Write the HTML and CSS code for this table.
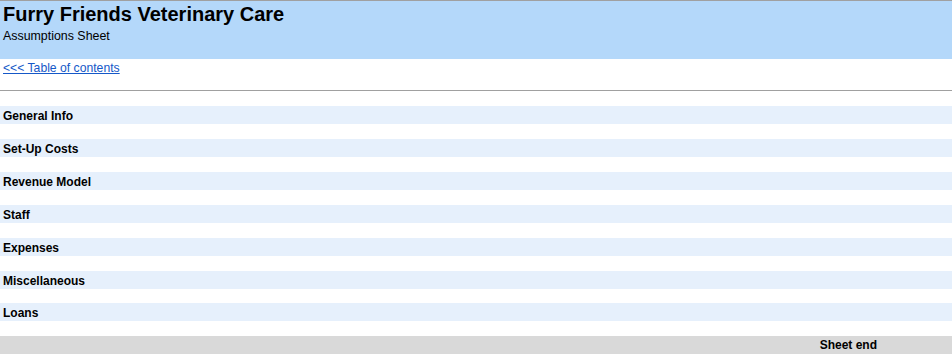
FILE: index.html
```html
<!DOCTYPE html>
<html>
<head>
<meta charset="utf-8">
<title>Furry Friends Veterinary Care - Assumptions</title>
<link rel="stylesheet" href="styles.css">
</head>
<body>
<div class="sheet">
  <header class="header">
    <h1 class="title">Furry Friends Veterinary Care</h1>
    <div class="subtitle">Assumptions Sheet</div>
  </header>
  <div class="link-row"><a class="toc-link" href="#">&lt;&lt;&lt; Table of contents</a></div>
  <div class="divider"></div>
  <div class="sections">
    <div class="spacer"></div>
    <div class="band">General Info</div>
    <div class="spacer"></div>
    <div class="band">Set-Up Costs</div>
    <div class="spacer"></div>
    <div class="band">Revenue Model</div>
    <div class="spacer"></div>
    <div class="band">Staff</div>
    <div class="spacer"></div>
    <div class="band">Expenses</div>
    <div class="spacer"></div>
    <div class="band">Miscellaneous</div>
    <div class="spacer spacer-short"></div>
    <div class="band">Loans</div>
    <div class="spacer"></div>
    <div class="sheet-end"><span class="sheet-end-label">Sheet end</span></div>
  </div>
</div>
</body>
</html>
```
FILE: styles.css
```css
* { box-sizing: border-box; }
html, body { margin: 0; padding: 0; background: #ffffff; }
body {
  font-family: Arial, "Liberation Sans", sans-serif;
  color: #000000;
  width: 952px;
  height: 355px;
  overflow: hidden;
}
.sheet {
  border-top: 1px solid #a0a0a0;
}
.header {
  background: #b4d8fa;
  height: 58px;
  padding: 2px 3px 0 3px;
}
.title {
  margin: 0;
  font-size: 20px;
  line-height: 23px;
  font-weight: bold;
}
.subtitle {
  font-size: 12.4px;
  line-height: 15px;
  padding-top: 3px;
}
.link-row {
  height: 31px;
  padding: 2px 3px 0 3px;
  font-size: 12.2px;
  line-height: 14px;
}
.toc-link {
  color: #1558c8;
  text-decoration: underline;
}
.divider {
  height: 1px;
  background: #a0a0a0;
}
.sections {
  display: flex;
  flex-direction: column;
}
.spacer { height: 15px; }
.spacer-short { height: 14px; }
.band {
  height: 18px;
  background: #e6f0fc;
  font-size: 12px;
  font-weight: bold;
  line-height: 18px;
  padding: 1px 3px 0 3px;
}
.sheet-end {
  height: 18px;
  background: #d9d9d9;
  display: flex;
  justify-content: flex-end;
  padding-right: 75px;
  font-size: 12px;
  font-weight: bold;
  line-height: 19px;
}
```
